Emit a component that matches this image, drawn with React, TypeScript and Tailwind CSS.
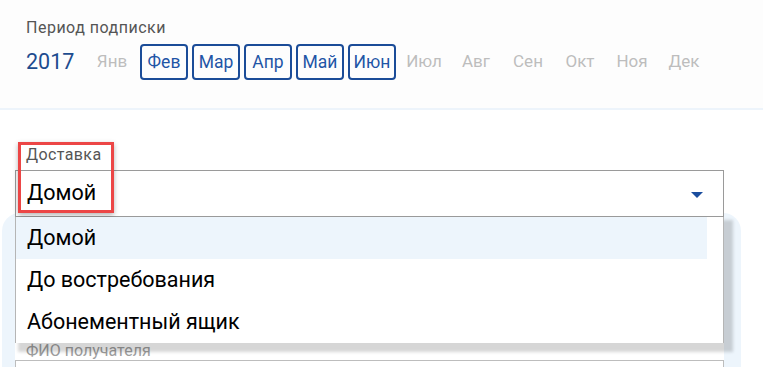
import React from "react"

const months = [
    { name: "Янв", active: false },
    { name: "Фев", active: true },
    { name: "Мар", active: true },
    { name: "Апр", active: true },
    { name: "Май", active: true },
    { name: "Июн", active: true },
    { name: "Июл", active: false },
    { name: "Авг", active: false },
    { name: "Сен", active: false },
    { name: "Окт", active: false },
    { name: "Ноя", active: false },
    { name: "Дек", active: false },
]

const options = ["Домой", "До востребования", "Абонементный ящик"]

export default function App() {
    return (
        <div className="w-[763px] h-[367px] overflow-hidden bg-white font-['Roboto',sans-serif]">
            {/* Subscription period */}
            <div className="pl-[26px] pt-[18px] pb-[28px] border-b-2 border-[#edf4fb] bg-[#fdfdfd]">
                <div className="text-[16px] leading-[20px] tracking-[0.5px] text-[#555]">Период подписки</div>
                <div className="flex items-center mt-[6px]">
                    <span className="w-[62px] text-[21.5px] leading-[36px] text-[#1d4c8f]">2017</span>
                    <div className="flex gap-1">
                        {months.map(m => (
                            <button
                                key={m.name}
                                className={`w-12 h-9 flex items-center justify-center rounded-[4px] ${m.active ? "border-2 border-[#1b4c98] text-[#1f55a6] text-[17.5px]" : "border-2 border-transparent text-[#bdbdbd] text-[17px]"}`}
                            >
                                {m.name}
                            </button>
                        ))}
                    </div>
                </div>
            </div>

            {/* Delivery */}
            <div className="pl-[15px] w-[724px] pt-[32px]">
                <div className="relative z-20">
                    <div className="pl-[11px] pt-[3px] pb-[5px] text-[16px] leading-[20px] tracking-[0.4px] text-[#555]">Доставка</div>
                    <div className="h-[47px] border border-[#9a9a9a] bg-white flex items-center justify-between pl-[11px] pr-[20px]">
                        <span className="text-[21.5px] text-black">Домой</span>
                        <svg width="12" height="6" viewBox="0 0 12 6" className="mt-[2px]">
                            <path d="M0 0 L12 0 L6 6 Z" fill="#1a4d9e" />
                        </svg>
                    </div>
                    {/* highlight box */}
                    <div className="absolute left-[3px] top-0 w-[96px] h-[71px] border-[3px] border-[#ec4646] shadow-[0_2px_5px_rgba(0,0,0,0.3)] pointer-events-none" />

                    {/* open list */}
                    <div className="absolute top-full left-0 right-0 bg-white border-x border-[#b5b5b5] shadow-[6px_6px_3px_3px_rgba(0,0,0,0.16)]">
                        {options.map((o, i) => (
                            <div
                                key={o}
                                className={`h-[42px] flex items-center pl-[11px] text-[21.5px] text-black ${i === 0 ? "bg-[#edf5fc] mr-[16px]" : ""}`}
                            >
                                {o}
                            </div>
                        ))}
                    </div>
                </div>

                {/* recipient field behind */}
                <div className="-ml-[13px] -mr-[17px] -mt-[4px] rounded-[18px] bg-[#edf5fc] pl-[13px] pr-[17px] pt-[4px] pb-[20px]">
                    <div className="bg-white pt-[124px]">
                        <div className="pl-[11px] text-[16px] leading-[20px] text-[#9e9e9e]">ФИО получателя</div>
                        <div className="h-[40px] border border-[#bdbdbd] mt-[-1px]" />
                    </div>
                </div>
            </div>
        </div>
    )
}
